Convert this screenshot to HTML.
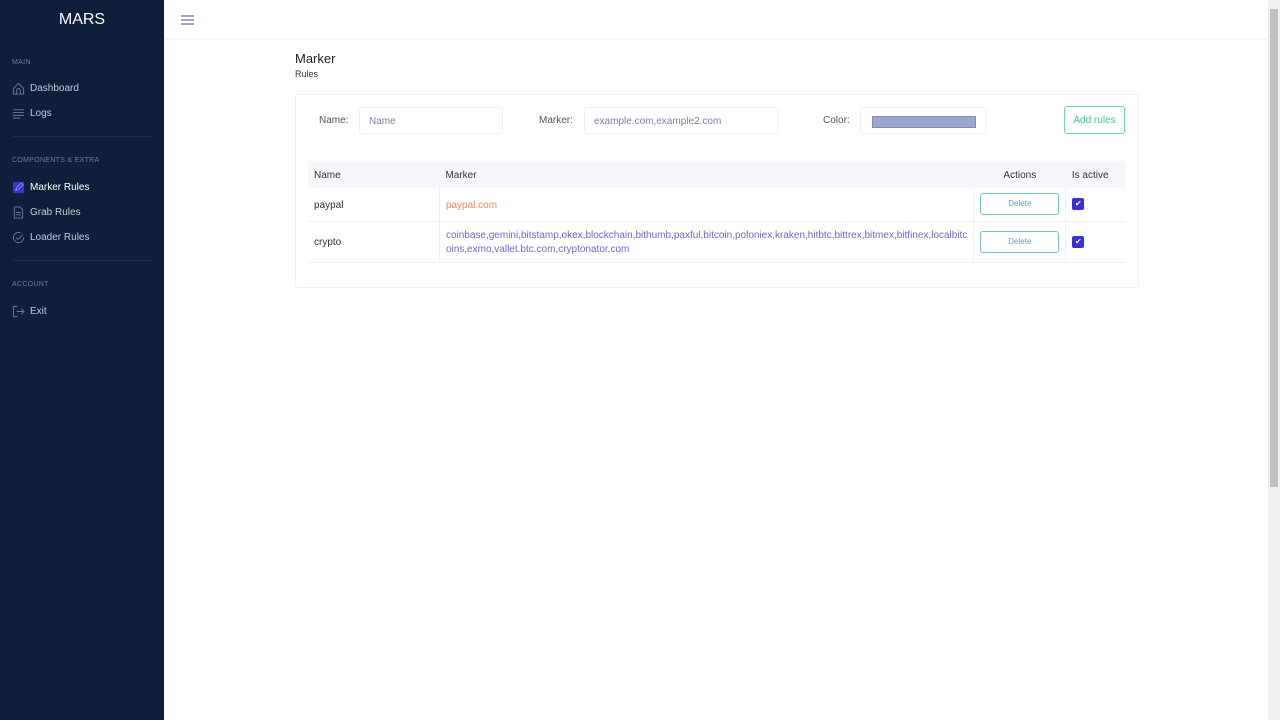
<!DOCTYPE html>
<html><head><meta charset="utf-8"><style>
*{box-sizing:border-box;margin:0;padding:0}
body{width:1280px;height:720px;overflow:hidden;font-family:"Liberation Sans",sans-serif;background:#fff;position:relative;font-size:10px}
.sb{position:absolute;left:0;top:0;width:164px;height:720px;background:#0f1f3b;color:#c5cbd8}
.logo{position:absolute;top:11px;width:164px;text-align:center;color:#fff;font-size:16px}
.sec{position:absolute;left:12px;font-size:7px;letter-spacing:.3px;color:#6e7a93}
.it{position:absolute;left:12px;font-size:10px;color:#c3c9d6;display:flex;align-items:center}
.it svg{width:13px;height:13px;margin-right:5px}
.hr{position:absolute;left:12px;width:140px;height:1px;background:#1d2d4b}
.top{position:absolute;left:164px;top:0;width:1104px;height:40px;border-bottom:1px solid #f2f3f6}
.sbar{position:absolute;left:1268px;top:0;width:12px;height:720px;background:#f1f1f1}
.sbar div{position:absolute;left:2px;top:9px;width:8px;height:478px;background:#c1c1c1}
.card{position:absolute;left:295px;top:94px;width:844px;height:194px;border:1px solid #eef0f4;border-radius:3px}
.lbl{position:absolute;font-size:10px;color:#555}
.inp{position:absolute;border:1px solid #eef0f4;border-radius:3px;height:27px;font-size:10px;color:#7a80a0;padding:8px 9px}
table{position:absolute;left:308px;top:161px;width:817px;border-collapse:collapse;font-size:10px;color:#333}
th{background:#f5f7fb;height:27px;text-align:left;font-weight:normal;padding:1px 6px 0;color:#333}
td{padding:0 6px;border-bottom:1px solid #eef0f4}
.del{width:79px;height:22px;border:1px solid #7ac0c8;border-radius:3px;color:#5aa0d0;font-size:8px;text-align:center;line-height:20px}
.cb{width:12px;height:12px;background:#3b2fd9;border-radius:2px;color:#fff;font-size:8px;line-height:12px;text-align:center}
</style></head><body>
<div class="sb">
<div class="logo">MARS</div>
<div class="sec" style="top:59px">MAIN</div>
<div class="it" style="top:82px"><svg viewBox="0 0 14 14" fill="none" stroke="#6e7a93" stroke-width="1"><path d="M1.5 7L7 1.5 12.5 7V13H1.5Z M5 13V9a2 2 0 0 1 4 0v4"/></svg>Dashboard</div>
<div class="it" style="top:107px"><svg viewBox="0 0 14 14" stroke="#6e7a93" stroke-width="1"><path d="M1 3h12M1 6h12M1 9h12M1 12h8"/></svg>Logs</div>
<div class="hr" style="top:136px"></div>
<div class="sec" style="top:157px">COMPONENTS &amp; EXTRA</div>
<div class="it" style="top:181px;color:#fff"><svg viewBox="0 0 14 14"><rect x="1" y="1" width="12" height="12" fill="#3b34c9"/><path d="M4 10l1-3 5-5 2 2-5 5z" stroke="#8c86ff" fill="none"/></svg>Marker Rules</div>
<div class="it" style="top:206px"><svg viewBox="0 0 14 14" fill="none" stroke="#6e7a93"><path d="M2.5 1h6l3 3v9h-9Z M4.5 7h5M4.5 9.5h5"/></svg>Grab Rules</div>
<div class="it" style="top:231px"><svg viewBox="0 0 14 14" fill="none" stroke="#6e7a93"><path d="M12.5 7A5.5 5.5 0 1 1 9 1.9M4.5 7l2 2 5-5"/></svg>Loader Rules</div>
<div class="hr" style="top:260px"></div>
<div class="sec" style="top:281px">ACCOUNT</div>
<div class="it" style="top:305px"><svg viewBox="0 0 14 14" fill="none" stroke="#6e7a93"><path d="M6 1.5H1.5v11H6M5 7h8M10 4l3 3-3 3"/></svg>Exit</div>
</div>
<div class="top"><svg style="position:absolute;left:17px;top:15px" width="13" height="10" viewBox="0 0 13 10" stroke="#6a6f9a" stroke-width="1.2"><path d="M0 1h13M0 5h13M0 9h13"/></svg></div>
<div style="position:absolute;left:295px;top:51px;font-size:13px;color:#222">Marker</div>
<div style="position:absolute;left:295px;top:69px;font-size:9px;color:#333">Rules</div>
<div class="card"></div>
<div class="lbl" style="left:319px;top:115px">Name:</div>
<div class="inp" style="left:359px;top:107px;width:144px">Name</div>
<div class="lbl" style="left:539px;top:115px">Marker:</div>
<div class="inp" style="left:584px;top:107px;width:195px">example.com,example2.com</div>
<div class="lbl" style="left:823px;top:115px">Color:</div>
<div class="inp" style="left:860px;top:107px;width:127px;padding:8px 11px"><div style="width:104px;height:12px;background:#9aa8cf;border:1px solid #7f8cb0"></div></div>
<div style="position:absolute;left:1064px;top:106px;width:61px;height:28px;border:1px solid #6fd8b2;border-radius:3px;color:#3cc88f;font-size:10px;text-align:center;line-height:28px">Add rules</div>
<table>
<tr><th style="width:135px">Name</th><th>Marker</th><th style="width:90px;text-align:center">Actions</th><th style="width:60px">Is active</th></tr>
<tr style="height:33px"><td style="padding-top:2px">paypal</td><td style="color:#e88b62;border-left:1px solid #eef0f4;padding-top:2px">paypal.com</td><td style="border-left:1px solid #eef0f4"><div class="del">Delete</div></td><td style="border-left:1px solid #eef0f4"><div class="cb">✔</div></td></tr>
<tr style="height:41px"><td style="padding-top:2px">crypto</td><td style="color:#6a6ad0;line-height:14px;border-left:1px solid #eef0f4;padding-top:2px">coinbase,gemini,bitstamp,okex,blockchain,bithumb,paxful,bitcoin,poloniex,kraken,hitbtc,bittrex,bitmex,bitfinex,localbitc oins,exmo,vallet.btc.com,cryptonator.com</td><td style="border-left:1px solid #eef0f4"><div class="del">Delete</div></td><td style="border-left:1px solid #eef0f4"><div class="cb">✔</div></td></tr>
</table>
<div class="sbar"><div></div></div>
</body></html>
